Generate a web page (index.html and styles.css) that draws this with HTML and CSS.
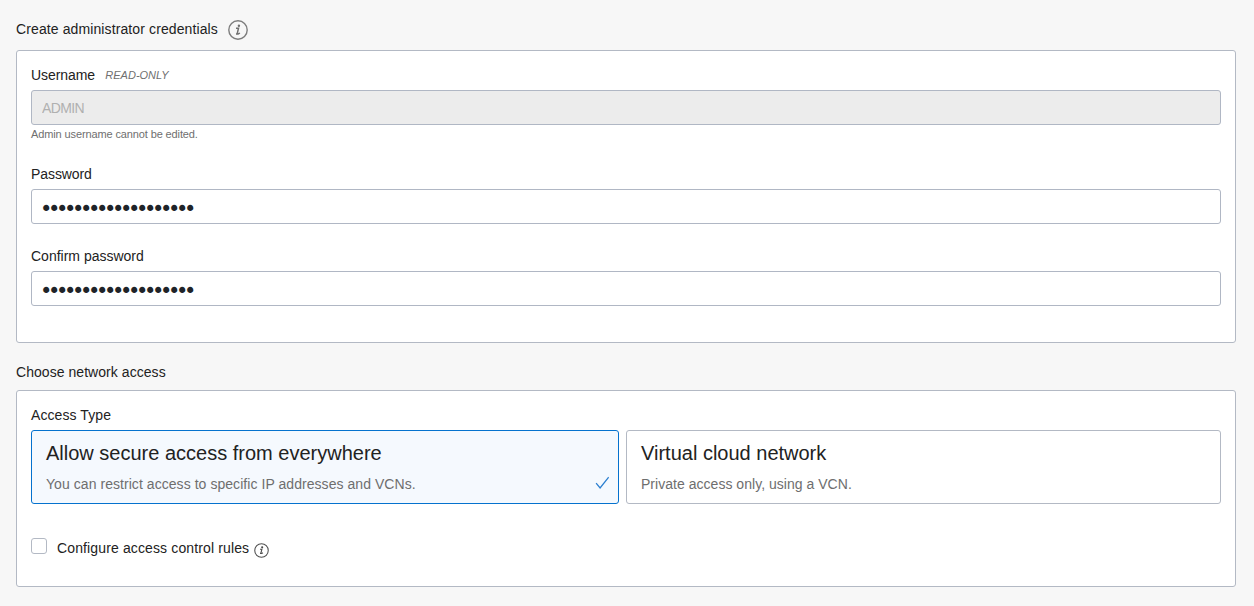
FILE: index.html
```html
<!DOCTYPE html>
<html lang="en">
<head>
<meta charset="utf-8">
<title>Create administrator credentials</title>
<link rel="stylesheet" href="styles.css">
</head>
<body>
<main class="page">
  <section>
    <h2 class="section-title"><span class="title-wide">Create administrator credentials</span>
      <svg class="info info-large" viewBox="0 0 20 20" aria-hidden="true"><circle cx="10" cy="10" r="9.2"/><path class="stem" d="M8 8.3H10.5L9.2 13.6Q9.6 14.6 11.9 13M8 13.9H9.6"/><circle class="dot" cx="10.9" cy="5.8" r="1.2"/></svg>
    </h2>
    <div class="panel credentials">
      <div class="field">
        <label class="label" for="username">Username <em class="tag">READ-ONLY</em></label>
        <input class="input" id="username" type="text" value="ADMIN" disabled>
        <p class="hint">Admin username cannot be edited.</p>
      </div>
      <div class="field">
        <label class="label" for="password">Password</label>
        <input class="input secret" id="password" type="password" value="0000000000000000000">
      </div>
      <div class="field">
        <label class="label label-plain" for="confirm">Confirm password</label>
        <input class="input secret" id="confirm" type="password" value="0000000000000000000">
      </div>
    </div>
  </section>
  <section class="network">
    <h2 class="section-title">Choose network access</h2>
    <div class="panel access">
      <div class="label label-type">Access Type</div>
      <div class="cards">
        <div class="card selected">
          <h3 class="card-title">Allow secure access from everywhere</h3>
          <p class="card-text">You can restrict access to specific IP addresses and VCNs.</p>
          <svg class="check" viewBox="0 0 14 14" aria-hidden="true"><path d="M1.1 7.2 5.1 12 13.7 1.2"/></svg>
        </div>
        <div class="card">
          <h3 class="card-title">Virtual cloud network</h3>
          <p class="card-text">Private access only, using a VCN.</p>
        </div>
      </div>
      <label class="rules">
        <input class="checkbox" type="checkbox">
        <span class="rules-text">Configure access control rules</span>
        <svg class="info info-small" viewBox="0 0 20 20" aria-hidden="true"><circle cx="10" cy="10" r="9"/><path class="stem" d="M8 8.3H10.5L9.2 13.6Q9.6 14.6 11.9 13M8 13.9H9.6"/><circle class="dot" cx="10.9" cy="5.8" r="1.4"/></svg>
      </label>
    </div>
  </section>
</main>
</body>
</html>
```

FILE: styles.css
```css
* { box-sizing: border-box; }
body {
  margin: 0;
  background: #f7f7f7;
  color: #222;
  font: 14px/20px "Liberation Sans", Arial, sans-serif;
}
h2, h3, p { margin: 0; font-weight: 400; }
.page { height: 606px; padding: 19px 18px 0 16px; overflow: hidden; }
.section-title {
  display: flex;
  align-items: center;
  height: 20px;
  margin-bottom: 11px;
  font-size: 14px;
  line-height: 20px;
  letter-spacing: .05px;
}
.title-wide { letter-spacing: .11px; }
.panel {
  padding: 14px;
  background: #fff;
  border: 1px solid #b3b9c4;
  border-radius: 3px;
}
.credentials { display: flex; flex-direction: column; height: 293px; }
.field { height: 82px; }
.field:first-child { height: 99px; }
.label { display: block; height: 25px; line-height: 20px; letter-spacing: -.08px; }
.label-plain { letter-spacing: 0; }
.label-type { letter-spacing: .08px; }
.tag { margin-left: 6.6px; color: #707070; font-size: 11px; letter-spacing: 0; vertical-align: 1px; line-height: 1; }
.input {
  display: block;
  width: 100%;
  height: 35px;
  padding: 0 10px;
  background: #fff;
  border: 1px solid #b0b7c4;
  border-radius: 3px;
  color: #1f2328;
  font: 14px "Liberation Sans", Arial, sans-serif;
}
.input:disabled { background: #ececec; color: #b0b0b0; letter-spacing: -.6px; }
.secret { padding: 5px 8px 0; font: 21px "DejaVu Sans", sans-serif; letter-spacing: -4.39px; }
.hint { color: #6f6f6f; font-size: 11px; line-height: 18px; letter-spacing: -.12px; }
.network { padding-top: 19px; }
.network .section-title { margin-bottom: 8px; }
.access { height: 197px; }
.cards { display: grid; grid-template-columns: 588px 595px; gap: 7px; }
.card {
  position: relative;
  height: 74px;
  padding: 10px 14px;
  border: 1px solid #b3b9c4;
  border-radius: 3px;
}
.selected { background: #f5f9fe; border-color: #0572ce; }
.card-title { font-size: 20px; line-height: 24px; }
.card-text { margin-top: 9px; color: #6e6e6e; line-height: 20px; letter-spacing: .03px; }
.selected .card-text { letter-spacing: .055px; }
.check { position: absolute; right: 9px; bottom: 13px; width: 14px; height: 14px; }
.check path { fill: none; stroke: #2b7fd0; stroke-width: 1.3; }
.rules { display: flex; align-items: center; height: 20px; margin-top: 34px; }
.rules-text { letter-spacing: .13px; }
.checkbox {
  appearance: none;
  width: 16px;
  height: 16px;
  margin: 0 10px 4px 0;
  background: #fff;
  border: 1px solid #b3b9c4;
  border-radius: 3px;
}
.info circle { fill: none; stroke: #7d7d7d; stroke-width: 1.4; }
.info .stem { fill: none; stroke: #707070; stroke-width: 1.5; }
.info .dot { fill: #707070; stroke: none; }
.info-large { width: 20px; height: 20px; margin: 2px 0 0 10px; }
.info-small { width: 15px; height: 15px; margin: 5px 0 0 5px; }
.info-small circle, .info-small .stem { stroke: #505050; }
.info-small .dot { fill: #444; }
```
